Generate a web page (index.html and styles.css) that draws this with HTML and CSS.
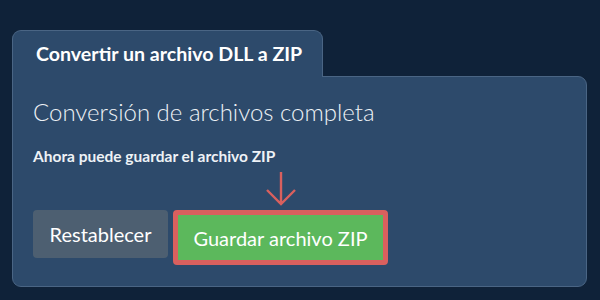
FILE: index.html
```html
<!DOCTYPE html>
<html lang="es">

<head>
  <meta charset="UTF-8">
  <meta name="viewport" content="width=device-width, initial-scale=1.0">
  <title>Convertir DLL a ZIP</title>
  <link rel="stylesheet" href="styles.css">
</head>

<body>

  <div class="converter">
    <div class="tab">Convertir un archivo DLL a ZIP</div>

    <div class="panel">
      <h2 class="title">Conversión de archivos completa</h2>
      <p class="note">Ahora puede guardar el archivo ZIP</p>

      <div class="actions">
        <button class="button btn-reset">Restablecer</button>
        <div class="save-wrap">
          <svg class="hint-arrow" width="30" height="34" viewBox="0 0 30 34">
            <path d="M15 0 V32 M1 18 L15 32 L29 18" fill="none" stroke="#d9605e" stroke-width="2.4" />
          </svg>
          <button class="button btn-save">Guardar archivo ZIP</button>
        </div>
      </div>
    </div>
  </div>

</body>

</html>
```

FILE: styles.css
```css
* {
  margin: 0;
  padding: 0;
  box-sizing: border-box;
}

body {
  background: #0f2239;
  font-family: Lato, "Noto Sans", sans-serif;
  color: #fff;
}

.converter {
  padding: 30px 13px 0 12px;
}

.tab {
  position: relative;
  display: inline-block;
  width: 311px;
  height: 47px;
  margin-bottom: -1px;
  padding: 11px 0 0 23px;
  background: #2d4a6b;
  border: 1px solid #4a6584;
  border-bottom: 0;
  border-radius: 9px 9px 0 0;
  font-size: 19.6px;
  font-weight: 700;
  z-index: 1;
}

.panel {
  height: 211px;
  padding: 20px 20px 0 20px;
  background: #2d4a6b;
  border: 1px solid #4a6584;
  border-radius: 0 9px 9px 9px;
}

.title {
  font-size: 24px;
  font-weight: 300;
  color: #eef2f6;
}

.note {
  margin-top: 21px;
  font-size: 15.5px;
  font-weight: 700;
  color: #eef2f6;
}

.actions {
  display: flex;
  align-items: flex-start;
  gap: 5px;
  margin-top: 45px;
}

.button {
  font-family: Lato, "Noto Sans", sans-serif;
  font-size: 20px;
  color: #fff;
  border: 0;
  cursor: pointer;
}

.btn-reset {
  width: 135px;
  height: 48px;
  background: #4d5f71;
  border-radius: 4px;
}

.save-wrap {
  position: relative;
}

.hint-arrow {
  position: absolute;
  left: 93px;
  top: -38px;
}

.btn-save {
  width: 215px;
  height: 55px;
  background: #5cb85c;
  border: 5px solid #d9605e;
  border-radius: 4px;
}
```
